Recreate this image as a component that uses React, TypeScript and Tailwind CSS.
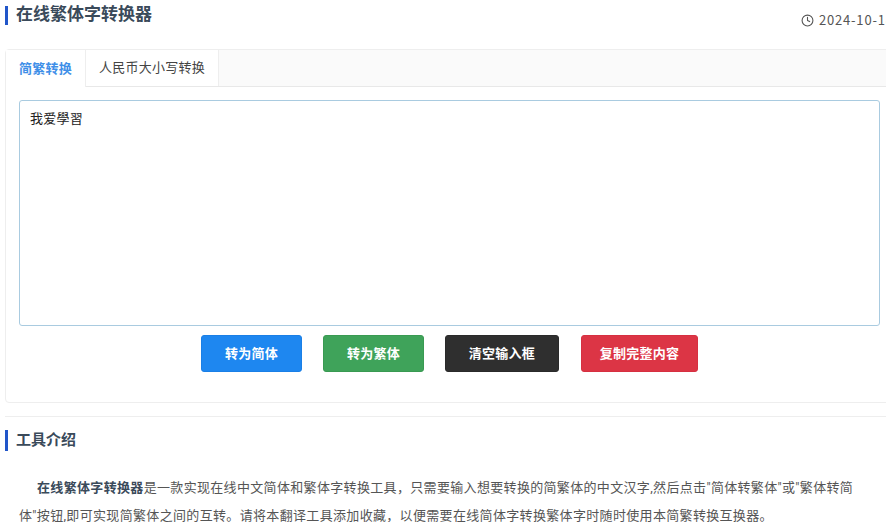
import { Clock } from "lucide-react";

const FONT = "font-['Roboto','Noto_Sans_CJK_SC',sans-serif]";

const BUTTONS = [
  { label: "转为简体", cls: "w-[101px] bg-[#1e87f0] border-[#1a7fe6]" },
  { label: "转为繁体", cls: "w-[101px] bg-[#3fa35a] border-[#399a52]" },
  { label: "清空输入框", cls: "w-[114px] bg-[#2f2f2f] border-[#2a2a2a]" },
  { label: "复制完整内容", cls: "w-[117px] ml-px bg-[#dc3545] border-[#d63041]" },
];

export default function App() {
  return (
    <div className={`w-[886px] h-[522px] overflow-hidden bg-white ${FONT}`}>
      <div className="w-[894px] pl-[5px]">
        <div className="h-[49px] flex justify-between items-start">
          <h1 className="mt-[6px] h-[19px] border-l-[3px] border-[#2156c9] pl-2 text-[17px] leading-[16px] font-bold text-[#3a4a5a]">
            在线繁体字转换器
          </h1>
          <div className="w-[93px] shrink-0 mt-[12px] flex items-center gap-[5px] text-[13px] leading-[16px] tracking-[0.8px] text-[#555] whitespace-nowrap font-['Noto_Sans_CJK_SC',sans-serif]">
            <Clock className="h-[13px] w-[13px] shrink-0" strokeWidth={2} />
            <span>2024-10-18</span>
          </div>
        </div>

        <div className="h-[354px] border border-[#eeeeee] rounded-sm">
          <div className="h-[37px] flex bg-[#fafafa] border-b border-[#e8e8e8]">
            <div className="w-[80px] h-[37px] bg-white border-r border-[#eeeeee] flex items-center justify-center text-[13px] tracking-[0.25px] font-bold text-[#3f8fe8]">
              简繁转换
            </div>
            <div className="w-[133px] h-[36px] bg-white border-r border-[#eeeeee] flex items-center justify-center text-[13px] tracking-[0.25px] text-[#444]">
              人民币大小写转换
            </div>
          </div>
          <div className="px-[13px] pt-[13px]">
            <textarea
              defaultValue="我爱學習"
              className="block w-full h-[226px] resize-none rounded-[3px] border border-[#a9cbe0] px-[10px] py-[8px] text-[13px] tracking-[0.25px] leading-[20px] text-[#222] outline-none"
            />
            <div className="mt-[9px] flex justify-center gap-[21px]">
              {BUTTONS.map((b) => (
                <button
                  key={b.label}
                  className={`h-[37px] rounded-[3px] border text-[13px] tracking-[0.25px] font-bold text-white ${b.cls}`}
                >
                  {b.label}
                </button>
              ))}
            </div>
          </div>
        </div>

        <div className="mt-[13px] border-t border-[#eeeeee] pt-[13px]">
          <h2 className="h-[21px] border-l-[3px] border-[#2156c9] pl-2 text-[15px] leading-[21px] font-bold text-[#3a4a5a]">
            工具介绍
          </h2>
          <p className="mt-[23px] w-[848px] ml-[14px] text-[13px] leading-[28px] tracking-[0.33px] indent-[18px] text-[#555]">
            <strong className="font-bold text-[#3a4a5a]">在线繁体字转换器</strong>
            是一款实现在线中文简体和繁体字转换工具，只需要输入想要转换的简繁体的中文汉字,然后点击"简体转繁体"或"繁体转简体"按钮,即可实现简繁体之间的互转。请将本翻译工具添加收藏，以便需要在线简体字转换繁体字时随时使用本简繁转换互换器。
          </p>
        </div>
      </div>
    </div>
  );
}
